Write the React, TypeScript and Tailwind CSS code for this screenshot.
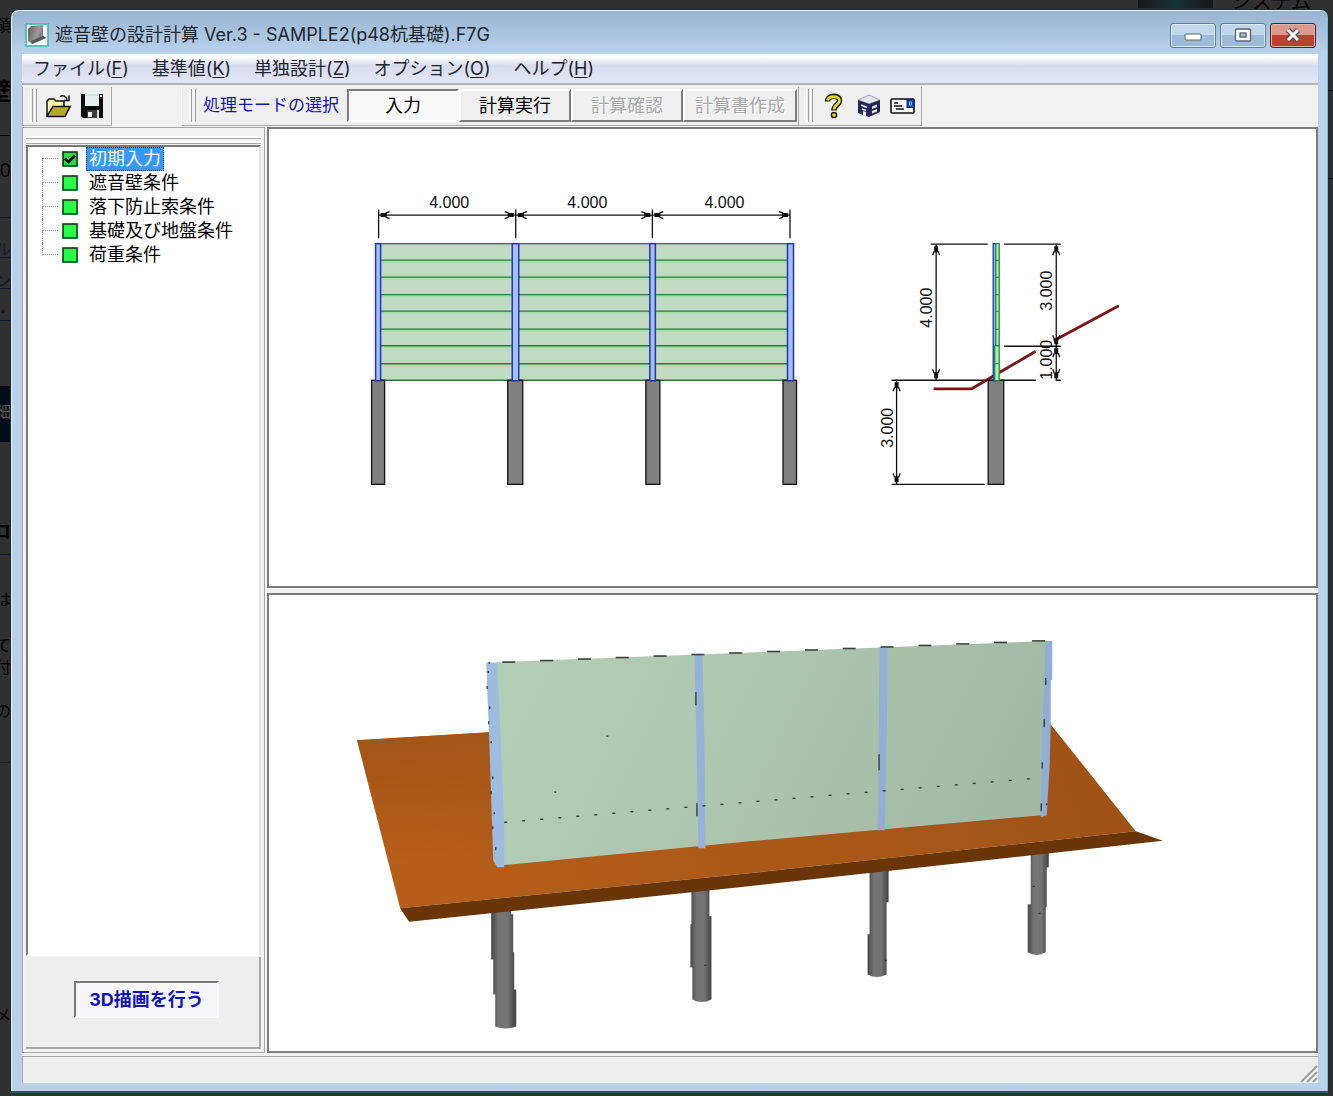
import React from "react";

const JP = "font-['Inter','Noto_Sans_CJK_JP',sans-serif]";
const GOTHIC = "font-['Liberation_Sans','Noto_Sans_CJK_JP',sans-serif]";

const menus = [
  { label: "ファイル", key: "F" },
  { label: "基準値", key: "K" },
  { label: "単独設計", key: "Z" },
  { label: "オプション", key: "O" },
  { label: "ヘルプ", key: "H" },
];

const treeItems = ["初期入力", "遮音壁条件", "落下防止索条件", "基礎及び地盤条件", "荷重条件"];

/* ---------- page behind the window ---------- */

function Backdrop() {
  const words = [
    { t: "領", c: "top-[14px] text-base text-black" },
    { t: "壁", c: "top-[80px] text-2xl font-bold text-black" },
    { t: "30", c: "top-[158px] text-xl text-black" },
    { t: "ル", c: "top-[238px] text-base text-[#0c1c3a]" },
    { t: "ン", c: "top-[270px] text-base text-[#0c1c3a]" },
    { t: "・", c: "top-[300px] text-base text-[#0c1c3a]" },
    { t: "コ", c: "top-[520px] text-lg font-bold text-black" },
    { t: "は", c: "top-[588px] text-base text-black" },
    { t: "て", c: "top-[634px] text-base text-black" },
    { t: "付", c: "top-[656px] text-base text-black" },
    { t: "の", c: "top-[700px] text-base text-black" },
    { t: "メ", c: "top-[1004px] text-base text-black" },
  ];
  return (
    <div aria-hidden="true" className="absolute inset-0 overflow-hidden">
      <div className="absolute left-0 top-[135px] h-px w-3 bg-black" />
      <div className="absolute left-0 top-[217px] h-px w-3 bg-[#0c1c3a]" />
      <div className="absolute left-0 top-[257px] h-px w-3 bg-[#0c1c3a]" />
      <div className="absolute left-0 top-[288px] h-px w-3 bg-[#0c1c3a]" />
      <div className="absolute left-0 top-[320px] h-px w-3 bg-[#0c1c3a]" />
      <div className="absolute left-0 top-[386px] h-14 w-3 bg-[#020d1c]" />
      <div className="absolute left-0 top-[554px] h-px w-3 bg-[#0c1c3a]" />
      <div className="absolute left-0 top-[762px] h-px w-3 bg-[#222222]" />
      {words.map((w) => (
        <span key={w.t} className={`absolute right-full mr-[-11px] leading-6 ${w.c}`}>
          {w.t}
        </span>
      ))}
      <span className="absolute right-full top-[400px] mr-[-11px] text-base leading-6 text-[#5a564c]">細</span>
      <div className="absolute right-[120px] top-0 h-2 w-[75px] bg-gradient-to-r from-[#161616] via-[#14343a] to-[#161616]" />
      <span className="absolute right-[22px] top-[-10px] text-xl leading-6 text-black">システム</span>
      <div className="absolute right-0 top-[90px] h-px w-1 bg-black" />
      <div className="absolute right-0 top-[178px] h-px w-1 bg-black" />
    </div>
  );
}

/* ---------- icons ---------- */

function AppIcon() {
  return (
    <svg viewBox="0 0 24 24" className="size-6" aria-hidden="true">
      <defs>
        <linearGradient id="wall" x1="0" y1="0" x2="1" y2="0.4">
          <stop offset="0" stopColor="#5c5c5c" />
          <stop offset="0.6" stopColor="#999" />
          <stop offset="1" stopColor="#6b6b6b" />
        </linearGradient>
      </defs>
      <rect x="1" y="1" width="22" height="22" fill="#f4fbfa" stroke="#3fb5ad" strokeWidth="1.600" />
      <path d="M3 6 6 3 18 2 18 13 21 15 7 21 3 18Z" fill="url(#wall)" />
      <path d="M18 13 21 15 7 21 6 18Z" fill="#555" />
    </svg>
  );
}

function OpenIcon() {
  return (
    <svg viewBox="0 0 26 26" className="size-[26px]" aria-hidden="true">
      <path d="M2 23V8l2-2h5l2 2h8v6" fill="#ffff9c" stroke="#111" strokeWidth="1.5" />
      <path d="M2 23 8 13.500H25L20 23.500H2Z" fill="#b0ad22" stroke="#111" strokeWidth="1.500" />
      <path d="M15 3.500c3-2 6 0 7 3M24 2.500V7.500h-5" fill="none" stroke="#111" strokeWidth="1.500" />
    </svg>
  );
}

function SaveIcon() {
  return (
    <svg viewBox="0 0 24 26" className="h-[26px] w-6" aria-hidden="true">
      <path d="M1 1H23V25H3L1 23Z" fill="#0a0a0a" />
      <path d="M5 1H19V13H5Z" fill="#e9eeee" />
      <path d="M5 1H19V3H5Z" fill="#bfe6e6" />
      <path d="M20 2h2v2h-2Z" fill="#f4f4f4" />
      <path d="M7 17H17V25H7Z" fill="#3c3c3c" />
      <path d="M8 19H12V24H8Z" fill="#f4f4f4" />
      <path d="M17 17h2v8h-2Z" fill="#ddd" />
    </svg>
  );
}

function HelpIcon() {
  return (
    <svg viewBox="0 0 20 26" className="h-[26px] w-5" aria-hidden="true">
      <path d="M3.500 8.500C3.500 1.500 15.500 2 15.500 7.500 15.500 12 10 11.500 10 17.500" fill="none" stroke="#1b1b08" strokeWidth="5.500" />
      <path d="M3.500 7.500C4.500 2.500 15.500 2.500 15.500 7.500 15.500 12 10 11.500 10 16.500" fill="none" stroke="#e2dc2a" strokeWidth="2.800" />
      <circle cx="10" cy="22" r="2.600" fill="#e2dc2a" stroke="#1b1b08" strokeWidth="1.500" />
    </svg>
  );
}

function CubeIcon() {
  return (
    <svg viewBox="0 0 24 24" className="size-6" aria-hidden="true">
      <path d="M1 6 12 1 23 6 12 10Z" fill="#e3e5ee" stroke="#9ba0b8" strokeWidth="1" />
      <path d="M1 6 12 10V23L9 22V18L6 17V21L1 19Z" fill="#23275a" />
      <path d="M12 10 23 6V18L12 23Z" fill="#23275a" />
      <path d="M4 11 10 13.500M5 15 9 16.500" fill="none" stroke="#eef0f8" strokeWidth="1.800" />
      <path d="M15 12.500 20 10.500V13L15 15ZM15 17 20 15V17.500L15 19.500Z" fill="#eef0f8" />
    </svg>
  );
}

function MailIcon() {
  return (
    <svg viewBox="0 0 26 18" className="h-[18px] w-[26px]" aria-hidden="true">
      <rect x="1" y="2" width="23" height="14" rx="1" fill="#fafafa" stroke="#111" strokeWidth="1.600" />
      <path d="M4 6h4M4 9h8M6 12h8" stroke="#111" strokeWidth="1.500" />
      <rect x="17" y="2.500" width="7" height="8" fill="#1550b8" stroke="#06215c" />
      <path d="M19.500 5h2v3h-2Z" fill="none" stroke="#8bb8ff" />
    </svg>
  );
}

function StateIcon({ checked }: { checked: boolean }) {
  return (
    <svg viewBox="0 0 16 16" className="size-4 shrink-0" aria-hidden="true">
      <rect x="1" y="1" width="14" height="14" fill={checked ? "#2fd84c" : "#2bfb45"} stroke="#0a3a10" strokeWidth="1.600" />
      {checked && <path d="M3 7.500 6.500 11 13 4.500" fill="none" stroke="#04140a" strokeWidth="3" />}
    </svg>
  );
}

/* ---------- window parts ---------- */

function TitleBar() {
  const glass =
    "flex h-[25px] w-[46px] items-center justify-center rounded-[3px] border border-[#5f7d9e] bg-gradient-to-b from-[#c3d7ea] from-50% to-[#9dbad6] to-50% shadow-[inset_0_0_0_1px_#d9e7f3]";
  return (
    <header className="flex h-11 items-center pt-[6px]">
      <span className="ml-[14px]">
        <AppIcon />
      </span>
      <h1 className={`ml-[6px] text-lg leading-6 text-[#1c2630] ${JP}`}>遮音壁の設計計算 Ver.3 - SAMPLE2(p48杭基礎).F7G</h1>
      <div className="ml-auto mr-3 flex gap-1">
        <button aria-label="最小化" className={glass}>
          <svg viewBox="0 0 18 8" className="mt-1 h-2 w-[18px]"><rect x="1" y="1" width="16" height="6" rx="1" fill="#fff" stroke="#5b646e" /></svg>
        </button>
        <button aria-label="最大化" className={glass}>
          <svg viewBox="0 0 18 14" className="h-[14px] w-[18px]">
            <rect x="1.500" y="1" width="15" height="12" rx="1" fill="#fff" stroke="#5b646e" strokeWidth="1.300" />
            <rect x="6" y="5" width="6" height="4" fill="#a9bdd0" stroke="#5b646e" strokeWidth="1.300" />
          </svg>
        </button>
        <button
          aria-label="閉じる"
          className="flex h-[25px] w-[46px] items-center justify-center rounded-[3px] border border-[#5a1f22] bg-gradient-to-b from-[#dc9a8e] from-50% to-[#bf4030] to-50% shadow-[inset_0_0_0_1px_#e6b0a8]"
        >
          <svg viewBox="0 0 16 14" className="h-[14px] w-4">
            <path d="M3 2 13 12M13 2 3 12" stroke="#5b4a55" strokeWidth="5.500" />
            <path d="M3 2 13 12M13 2 3 12" stroke="#fff" strokeWidth="3" />
          </svg>
        </button>
      </div>
    </header>
  );
}

function MenuBar() {
  return (
    <nav className="flex h-[30px] items-center gap-[23px] border-b border-[#b4b4bc] bg-gradient-to-b from-white from-10% via-[#d8dcee] via-40% to-[#e3e6f5] pl-[11px]">
      {menus.map((m) => (
        <button key={m.key} className={`text-lg leading-6 text-[#22242c] ${JP}`}>
          {m.label}(<span className="underline underline-offset-2">{m.key}</span>)
        </button>
      ))}
    </nav>
  );
}

function Grip() {
  return (
    <span className="flex gap-px" aria-hidden="true">
      <span className="h-[33px] w-[3px] border-l border-r border-l-white border-r-[#a0a0a0]" />
      <span className="h-[33px] w-[3px] border-l border-r border-l-white border-r-[#a0a0a0]" />
    </span>
  );
}

function ToolBar() {
  const group = "flex h-[39px] items-center border-b border-r border-[#a9a9a9] bg-[#efefef]";
  const mode = `h-[33px] border-2 text-lg leading-6 ${GOTHIC}`;
  const raised = "border-t-white border-l-white border-r-[#7d7d7d] border-b-[#7d7d7d] bg-[#efefef]";
  return (
    <div className="flex h-[43px] items-center border-t border-[#b5b5b5] bg-[#f1f1f1]">
      <div className={`${group} w-[90px] border-l pl-[7px]`}>
        <Grip />
        <button aria-label="開く" className="ml-2"><OpenIcon /></button>
        <button aria-label="保存" className="ml-[9px]"><SaveIcon /></button>
      </div>
      <div className={`${group} ml-[69px] border-l border-l-white pl-[7px] pr-px`}>
        <Grip />
        <span className={`ml-[7px] w-36 whitespace-nowrap text-[17px] leading-6 text-[#1414b4] ${GOTHIC}`}>処理モードの選択</span>
        <button className={`${mode} w-28 border-t-[#7d7d7d] border-l-[#7d7d7d] border-r-white border-b-white bg-[#f8f8f8]`}>入力</button>
        <button className={`${mode} w-28 ${raised} text-black`}>計算実行</button>
        <button disabled className={`${mode} w-28 ${raised} text-[#a8a8a8] [text-shadow:1px_1px_0_#fff]`}>計算確認</button>
        <button disabled className={`${mode} w-[114px] ${raised} text-[#a8a8a8] [text-shadow:1px_1px_0_#fff]`}>計算書作成</button>
      </div>
      <div className={`${group} pl-[7px] pr-[5px]`}>
        <Grip />
        <button aria-label="ヘルプ" className="ml-[11px]"><HelpIcon /></button>
        <button aria-label="FB" className="ml-[13px]"><CubeIcon /></button>
        <button aria-label="メール" className="ml-[9px]"><MailIcon /></button>
      </div>
    </div>
  );
}

function TreeRow({ label, first, last }: { label: string; first: boolean; last: boolean }) {
  return (
    <li className="flex h-6 items-center">
      <span className="mr-1 grid h-6 w-4 shrink-0 grid-rows-2" aria-hidden="true">
        <span className={`border-b border-dotted border-[#8a8a8a] ${first ? "" : "border-l"}`} />
        <span className={`border-dotted border-[#8a8a8a] ${last ? "" : "border-l"}`} />
      </span>
      <StateIcon checked={first} />
      <button
        className={`ml-2 h-6 whitespace-nowrap px-[2px] text-lg leading-5 ${GOTHIC} ${
          first ? "border border-dotted border-[#1c3a5c] bg-[#3797f5] text-white" : "border border-transparent text-black"
        }`}
      >
        {label}
      </button>
    </li>
  );
}

function SidePanel() {
  return (
    <aside className="flex w-[243px] shrink-0 flex-col border border-[#a8a8a8] bg-[#f1f1f1] p-[3px] pt-0">
      <div className="mt-2 h-[3px] border-b border-[#a8a8a8] bg-white" />
      <div className="mt-[2px] h-[3px] border-b border-[#a8a8a8] bg-white" />
      <ul className="mt-px flex-1 border-2 border-b-white border-l-[#787878] border-r-[#e6e6e6] border-t-[#787878] bg-white pl-[14px]">
        {treeItems.map((t, i) => (
          <TreeRow key={t} label={t} first={i === 0} last={i === treeItems.length - 1} />
        ))}
      </ul>
      <div className="mt-px flex h-[92px] items-start justify-center border-b-2 border-r-2 border-[#a8a8a8] bg-[#eeeeee] pl-2 pt-6">
        <button
          className={`h-[37px] w-[145px] border-2 border-b-white border-l-[#787878] border-r-white border-t-[#787878] bg-[#f6f6f8] text-lg font-bold leading-6 text-[#1010c0] ${JP}`}
        >
          3D描画を行う
        </button>
      </div>
    </aside>
  );
}

/* ---------- 2D drawing ---------- */

function Dim({ x1, y1, x2, y2 }: { x1: number; y1: number; x2: number; y2: number }) {
  const len = Math.hypot(x2 - x1, y2 - y1);
  const ang = (Math.atan2(y2 - y1, x2 - x1) * 180) / Math.PI;
  return (
    <g transform={`translate(${x1} ${y1}) rotate(${ang})`} stroke="#111" strokeWidth="1.300" fill="none">
      <path d={`M0 0H${len}`} />
      <path d={`M2 0H8M${len - 8} 0H${len - 2}`} strokeWidth="4" />
      <path d={`M11 -3.500 7 -2M11 3.500 7 2M${len - 11} -3.500 ${len - 7} -2M${len - 11} 3.500 ${len - 7} 2`} />
    </g>
  );
}

function DimText({ x, y, children, up }: { x: number; y: number; children: string; up?: boolean }) {
  return (
    <text
      transform={up ? `translate(${x} ${y}) rotate(-90)` : `translate(${x} ${y})`}
      textAnchor="middle"
      fill="#111"
      className="font-['Liberation_Sans_Narrow','Liberation_Sans',sans-serif] text-[16px]"
    >
      {children}
    </text>
  );
}

const rails = [244, 260.5, 277.5, 295, 311.5, 329.5, 346, 364, 380.5];
const posts = [
  { x: 376.5, w: 5 },
  { x: 513, w: 6.5 },
  { x: 650.5, w: 5.5 },
  { x: 788, w: 6 },
];
const piles = [
  { x: 372.5, w: 13 },
  { x: 508.5, w: 15 },
  { x: 646.5, w: 14 },
  { x: 783.5, w: 13.5 },
];

function PlanDrawing() {
  return (
    <svg viewBox="270 130 1046 455" className="h-full w-full" role="img" aria-label="正面図・側面図">
      <rect x="379" y="244" width="412" height="136.500" fill="#c1dbc2" />
      {rails.map((y) => (
        <g key={y}>
          {y < 380 && <path d={`M379 ${y + 1.5}H791`} stroke="#a5dfaa" strokeWidth="2" />}
          <path d={`M379 ${y}H791`} stroke="#2b7a38" strokeWidth="1.300" />
        </g>
      ))}
      {piles.map((p) => (
        <rect key={p.x} x={p.x} y="380.500" width={p.w} height="104" fill="#808080" stroke="#111" strokeWidth="1.300" />
      ))}
      {posts.map((p) => (
        <rect key={p.x} x={p.x} y="244" width={p.w} height="137" fill="#a3c0fb" stroke="#2233b8" strokeWidth="1.500" />
      ))}
      <path d="M379.500 210V238.500M516.500 210V238.500M653 210V238.500M790.500 210V238.500" stroke="#111" strokeWidth="1.300" />
      <Dim x1={379.5} y1={215.5} x2={516.5} y2={215.5} />
      <Dim x1={516.5} y1={215.5} x2={653} y2={215.5} />
      <Dim x1={653} y1={215.5} x2={790.5} y2={215.5} />
      <DimText x={450} y={208}>4.000</DimText>
      <DimText x={588} y={208}>4.000</DimText>
      <DimText x={725} y={208}>4.000</DimText>

      <path
        d="M931 244.500H988M1004.500 244.500H1061M1004.500 346.500H1061M892 380.500H1036M1056 380.500H1061M892 484.500H985"
        stroke="#111"
        strokeWidth="1.300"
      />
      <path d="M934 389H972L1036 351.500M1054 341 1119 306" fill="none" stroke="#7a1416" strokeWidth="2.800" />
      <rect x="988.500" y="380.500" width="15.500" height="104" fill="#808080" stroke="#111" strokeWidth="1.300" />
      <rect x="993.500" y="244" width="3" height="137" fill="#8fc1f0" stroke="#2233b8" strokeWidth="1.300" />
      <rect x="996" y="244" width="3.500" height="102" fill="#a8eeb0" stroke="#218a38" strokeWidth="1.300" />
      <rect x="995" y="346" width="4.500" height="35" fill="#a8f5a8" stroke="#218a38" strokeWidth="1.300" />
      <path d="M996 260.500h3M996 277.500h3M996 295h3M996 311.500h3M996 329.500h3M995 364h4" stroke="#218a38" />
      <Dim x1={936.5} y1={244.5} x2={936.5} y2={380.5} />
      <Dim x1={1056.5} y1={244.5} x2={1056.5} y2={346.5} />
      <Dim x1={1056.5} y1={346.5} x2={1056.5} y2={380.5} />
      <Dim x1={897} y1={380.5} x2={897} y2={484.5} />
      <DimText x={932} y={308} up>4.000</DimText>
      <DimText x={1052} y={291} up>3.000</DimText>
      <DimText x={1052} y={360} up>1.000</DimText>
      <DimText x={893} y={428} up>3.000</DimText>
    </svg>
  );
}

/* ---------- 3D drawing ---------- */

const columns3d = [
  { d: "M492 905H512V915H514V953H515V990H517V1027Q506 1031 496 1027V995H494V960H492Z" },
  { d: "M692 885H710V917H712V1000Q702 1005 693 1000V968H691V925H692Z" },
  { d: "M870 865H889V903H887V975Q877 980 868 975V935H870Z" },
  { d: "M1031 850H1049V868H1047V908H1046V953Q1037 958 1028 953V905H1031Z" },
];

function SceneDrawing() {
  const topMarks = Array.from({ length: 15 }, (_, i) => 503 + i * 37.8).filter((x) => x < 1045);
  const dots = Array.from({ length: 30 }, (_, i) => 505 + i * 18);
  return (
    <svg viewBox="270 596 1046 456" className="h-full w-full" role="img" aria-label="3D表示">
      <defs>
        <linearGradient id="steel">
          <stop offset="0" stopColor="#474747" />
          <stop offset="0.300" stopColor="#747474" />
          <stop offset="0.650" stopColor="#747474" />
          <stop offset="1" stopColor="#404040" />
        </linearGradient>
        <linearGradient id="panel" x1="0" y1="0" x2="1" y2="0.200">
          <stop offset="0" stopColor="#b4ceb6" />
          <stop offset="0.500" stopColor="#adc6b0" />
          <stop offset="1" stopColor="#a2baa5" />
        </linearGradient>
        <linearGradient id="soil" gradientUnits="userSpaceOnUse" x1="440" y1="900" x2="1070" y2="640">
          <stop offset="0" stopColor="#b65e1a" />
          <stop offset="0.850" stopColor="#a25417" />
          <stop offset="1" stopColor="#9f5217" />
        </linearGradient>
        <linearGradient id="soilBack" gradientUnits="userSpaceOnUse" x1="430" y1="735" x2="440" y2="860">
          <stop offset="0" stopColor="#a35417" />
          <stop offset="1" stopColor="#a35417" stopOpacity="0" />
        </linearGradient>
      </defs>
      {columns3d.map((c) => (
        <path key={c.d} d={c.d} fill="url(#steel)" />
      ))}
      <path d="M358 741 490 733 1050 724 1136 832 740 875 401 909Z" fill="url(#soil)" />
      <path d="M358 741 490 733 502 866 401 909Z" fill="url(#soilBack)" />
      <path d="M401 909 740 875 1136 832 1163 841.500 740 888 410 922.500Z" fill="#693509" />
      <path d="M497 663 1048 642 1042 816 740 843 502 866Z" fill="url(#panel)" />
      <path d="M487 663.500H498L501 730 505 830V868H498L494 861 490 740Z" fill="#9ebbe0" />
      <path d="M695 656H703L705 740 706 849H699L697 740Z" fill="#97b2d8" />
      <path d="M880 648H888V690L885 831H878L879 760Z" fill="#92aed3" />
      <path d="M1046 642H1052.500V681H1051V724L1050 763 1047 816 1041 818 1042 750Z" fill="#90add5" />
      {topMarks.map((x) => (
        <path key={x} d={`M${x} ${663 - (x - 503) * 0.04}h13`} stroke="#3a423c" strokeWidth="1.600" />
      ))}
      {dots.map((x) => (
        <path key={x} d={`M${x} ${823 - (x - 505) * 0.083}h3`} stroke="#2f4035" strokeWidth="1.400" />
      ))}
      <path
        d="M490 663v2M489 672v2M488 687v3M490.500 707v3M489.500 722v3M492 742v2M493.500 777v3M492 792v3M495 813v2M493.500 827v3M496.500 848v3M696.500 693v13M697.500 804v13M879.500 755v16M1046 679v7M1044.500 720v8M1042.500 763v6M1047 804v2M1041.500 804v8M607 737h2M555 793h2M1033 887h2M1039 914h2M705 966h2M885 961h2"
        stroke="#2b3640"
        strokeWidth="1.300"
      />
    </svg>
  );
}

export default function App() {
  const view =
    "min-h-0 border-2 border-b-[#7c7c7c] border-l-[#7c7c7c] border-r-[#7c7c7c] border-t-[#7c7c7c] bg-white";
  return (
    <div className={`relative flex h-screen min-h-[640px] bg-[#303030] pb-[3px] pl-[10px] pr-1 pt-[9px] ${GOTHIC}`}>
      <Backdrop />
      <div className="relative flex min-w-0 flex-1 flex-col rounded-t-lg border border-b-2 border-[#1a2a33] border-b-[#1f5a68] bg-[#b9d1ea] bg-gradient-to-b from-[#98b3d0] to-[#b9d1ea] to-[42px] shadow-[inset_1px_1px_0_#e8f2fa,inset_-1px_0_0_#62c4dc]">
        <TitleBar />
        <div className="mx-[10px] mb-2 ml-[11px] flex min-h-0 flex-1 flex-col bg-[#f1f1f1]">
          <MenuBar />
          <ToolBar />
          <main className="flex min-h-0 flex-1 gap-[2px]">
            <SidePanel />
            <div className="flex min-w-0 flex-1 flex-col gap-[5px]">
              <section className={`${view} flex-1`}>
                <PlanDrawing />
              </section>
              <section className={`${view} flex-1`}>
                <SceneDrawing />
              </section>
            </div>
          </main>
          <footer className="mt-[3px] flex h-[27px] items-end justify-end border-l border-t border-[#a8a8a8] bg-[#eeeeee]">
            <svg viewBox="0 0 18 18" className="size-[18px]" aria-hidden="true">
              <path d="M1 17 17 1M7 17 17 7M13 17 17 13" stroke="#9c9c9c" strokeWidth="2" />
            </svg>
          </footer>
        </div>
      </div>
    </div>
  );
}
